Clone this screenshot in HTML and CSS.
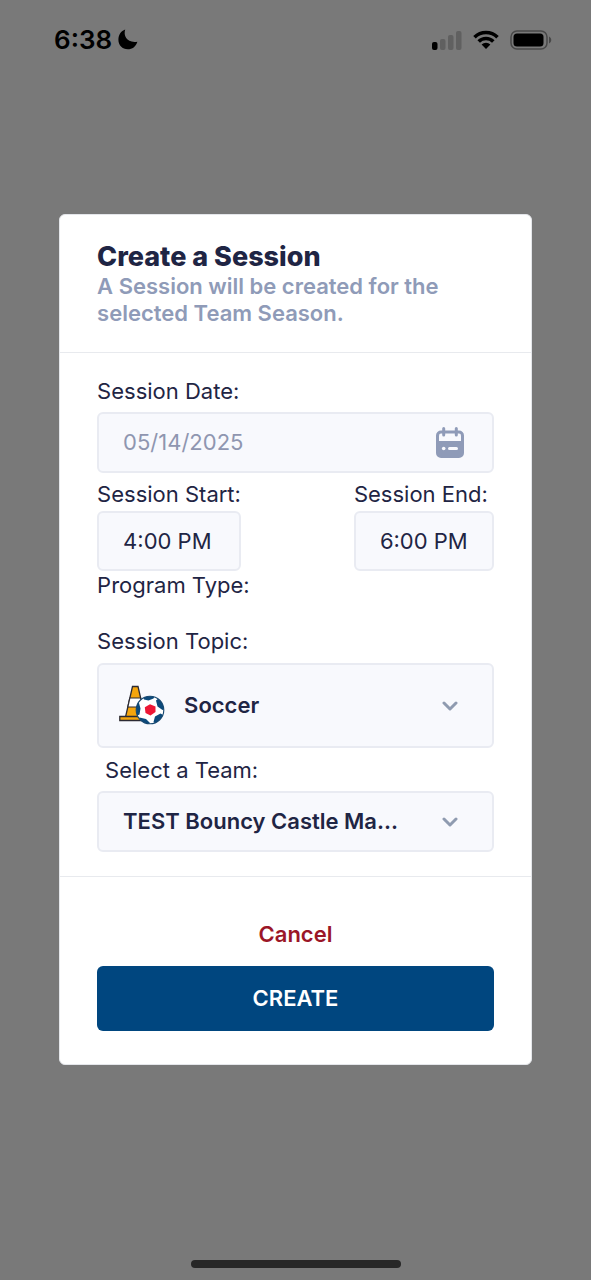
FILE: index.html
```html
<!DOCTYPE html>
<html lang="en">
<head>
<meta charset="utf-8">
<meta name="viewport" content="width=device-width, initial-scale=1">
<title>Create a Session</title>
<link rel="stylesheet" href="styles.css">
</head>
<body class="screen">
<header class="status">
  <div class="status-group">
    <span class="clock">6:38</span>
    <svg class="moon" width="20" height="21" viewBox="0 0 20 21" aria-hidden="true"><path d="M7.2.6C5 7.4 9.600 14.500 19.400 12.700 17.800 17.600 14.300 20.300 9.800 20.300 4.300 20.300.4 16.200.4 10.800.4 6 3 2 7.200.6Z"/></svg>
  </div>
  <div class="status-group status-icons">
    <svg width="30" height="20" viewBox="0 0 30 20" aria-hidden="true"><rect y="12" width="5.500" height="8" rx="2"/><g fill="#606060"><rect x="8" y="9" width="5.500" height="11" rx="2"/><rect x="16" y="5" width="5.500" height="15" rx="2"/><rect x="24" y="1" width="5.500" height="19" rx="2"/></g></svg>
    <svg width="26" height="19" viewBox="0 0 26 19" aria-hidden="true"><g fill="none" stroke="#000" stroke-width="3.600"><path d="M1.500 7.200A16.500 16.500 0 0 1 24.500 7.200"/><path d="M5.700 11.500A10.400 10.400 0 0 1 20.300 11.500"/></g><path d="M13 19 8.600 14.600A6.300 6.300 0 0 1 17.400 14.600Z"/></svg>
    <svg width="42" height="20" viewBox="0 0 42 20" aria-hidden="true"><rect x="1" y="1" width="36" height="18" rx="6" fill="none" stroke="#484848" stroke-width="1.500"/><rect x="3.500" y="3.500" width="30" height="13" rx="3.500"/><path d="M39 6.500c3 1.500 3 5.500 0 7Z" fill="#484848"/></svg>
  </div>
</header>

<main class="stage">
  <form class="modal" role="dialog" aria-labelledby="title">
    <div class="modal-head">
      <h1 class="title" id="title">Create a Session</h1>
      <p class="subtitle">A Session will be created for the selected Team Season.</p>
    </div>
    <div class="modal-body">
      <label class="label" for="date">Session Date:</label>
      <div class="control">
        <input class="field muted" id="date" type="text" value="05/14/2025">
        <svg class="calendar" width="28" height="31" viewBox="0 0 28 31" aria-hidden="true"><path d="M5 3.500H23A5 5 0 0 1 28 8.500V26A5 5 0 0 1 23 31H5A5 5 0 0 1 0 26V8.500A5 5 0 0 1 5 3.500Z" fill="#8f9bb8"/><path d="M3 14V8.500Q3 6.500 5 6.500H23Q25 6.500 25 8.500V14Z" fill="#f8f9fd"/><path d="M7.700 1.500V8M20.300 1.500V8" stroke="#8f9bb8" stroke-width="3" stroke-linecap="round"/><circle cx="7.700" cy="21.500" r="1.800" fill="#f8f9fd"/><path d="M13.500 21.500H20.500" stroke="#f8f9fd" stroke-width="3" stroke-linecap="round"/></svg>
      </div>
      <div class="times">
        <div class="time-start">
          <label class="label" for="start">Session Start:</label>
          <input class="field" id="start" type="text" value="4:00 PM">
        </div>
        <div class="time-end">
          <label class="label" for="end">Session End:</label>
          <input class="field" id="end" type="text" value="6:00 PM">
        </div>
      </div>
      <p class="label program">Program Type:</p>
      <label class="label" for="topic">Session Topic:</label>
      <div class="control topic-control">
        <select class="field select tall" id="topic"><option>Soccer</option></select>
        <svg class="soccer" width="46" height="40" viewBox="0 0 46 40" aria-hidden="true">
          <path d="M13.500 1.500H19L26 32H6.500Z" fill="#f5a50c" stroke="#2b2a33" stroke-width="1.300"/>
          <path d="M10.800 13H21.600L24 22H8.800Z" fill="#fff" stroke="#2b2a33" stroke-width="1.200"/>
          <path d="M.8 31.500H25V35.500H.8Z" fill="#f5a50c" stroke="#2b2a33" stroke-width="1.300"/>
          <clipPath id="ball"><circle cx="31" cy="25" r="13.800"/></clipPath>
          <circle cx="31" cy="25" r="13.800" fill="#fff"/>
          <g clip-path="url(#ball)" fill="#0c4a7b"><path d="M23 9H37L34.500 13.500 29.500 15.500 25 14.500ZM15 18.500 20 18 21.500 23.500 20.500 29.500 15 32ZM20.500 32.500 27 34 31 38 29 41H20ZM34.500 37 36 31.500 41.500 28.500 46 31 39 41ZM37 15.500 41 12 47 24 43.500 25 38.500 21.500Z"/></g>
          <path d="M31 19.200 36.500 21.500 36.500 27 31.500 30.500 26.500 28 25.800 22.200Z" fill="#ed1735"/>
          <circle cx="31" cy="25" r="13.800" fill="none" stroke="#16476f" stroke-width="1.100"/>
        </svg>
        <svg class="chevron" width="16" height="10" viewBox="0 0 16 10" aria-hidden="true"><path d="M2 2 8 8 14 2"/></svg>
      </div>
      <label class="label team-label" for="team">Select a Team:</label>
      <div class="control">
        <select class="field select" id="team"><option>TEST Bouncy Castle Ma...</option></select>
        <svg class="chevron" width="16" height="10" viewBox="0 0 16 10" aria-hidden="true"><path d="M2 2 8 8 14 2"/></svg>
      </div>
    </div>
    <div class="modal-foot">
      <button class="cancel" type="button">Cancel</button>
      <button class="create" type="submit">CREATE</button>
    </div>
  </form>
</main>

<footer class="home"><div class="home-bar"></div></footer>
</body>
</html>
```
FILE: styles.css
```css
* {
  box-sizing: border-box;
}

.screen {
  margin: 0;
  min-height: 100vh;
  display: flex;
  flex-direction: column;
  background: #797979;
  color: #1f2544;
  font-family: Inter, "Liberation Sans", sans-serif;
  font-size: 22px;
  line-height: 28px;
}

.status {
  height: 78px;
  padding: 1px 39px 0 54px;
  display: flex;
  align-items: center;
  justify-content: space-between;
  color: #000;
}

.status-group {
  display: flex;
  align-items: center;
  gap: 6px;
}

.status-icons {
  gap: 11px;
}

.clock {
  font-size: 26px;
  font-weight: 600;
}

.stage {
  flex: 1;
  display: flex;
  align-items: center;
  justify-content: center;
}

.modal {
  width: 80%;
  background: #fff;
  border: 1px solid #e4e6ea;
  border-radius: 6px;
}

.modal-head {
  padding: 26px 37px 25px;
  border-bottom: 1px solid #e8eaee;
}

.title {
  margin: 0;
  font-size: 27px;
  font-weight: 800;
  line-height: 32px;
}

.subtitle {
  margin: 0;
  color: #8f9bb8;
  font-weight: 600;
  line-height: 27px;
}

.modal-body {
  padding: 24px 37px;
  border-bottom: 1px solid #e8eaee;
}

.label {
  display: block;
  margin: 0;
  white-space: nowrap;
}

.control {
  position: relative;
  margin: 7px 0;
}

.topic-control {
  margin: 8px 0;
}

.field {
  display: block;
  width: 100%;
  height: 61px;
  margin: 0;
  padding: 0 24px;
  border: 2px solid #e9ebf2;
  border-radius: 6px;
  background: #f8f9fd;
  color: inherit;
  font: inherit;
}

.muted {
  color: #8f96b0;
}

.select {
  appearance: none;
  font-weight: 600;
}

.tall {
  height: 85px;
  padding-left: 85px;
}

.calendar {
  position: absolute;
  right: 30px;
  top: 15px;
}

.soccer {
  position: absolute;
  left: 22px;
  top: 22px;
}

.chevron {
  position: absolute;
  right: 36px;
  top: calc(50% - 4px);
  fill: none;
  stroke: #8f9bb0;
  stroke-width: 3;
  stroke-linecap: round;
  stroke-linejoin: round;
}

.times {
  display: flex;
  justify-content: space-between;
}

.times .field {
  margin-top: 3px;
  height: 60px;
}

.time-start {
  width: 144px;
}

.time-end {
  width: 140px;
}

.program {
  margin-bottom: 28px;
}

.team-label {
  padding-left: 8px;
}

.modal-body .control:last-child {
  margin-bottom: 0;
}

.modal-foot {
  padding: 33px 37px;
  display: flex;
  flex-direction: column;
}

.cancel {
  height: 48px;
  margin-bottom: 8px;
  padding: 0;
  border: 0;
  background: none;
  color: #9b1627;
  font: inherit;
  font-weight: 600;
}

.create {
  height: 65px;
  border: 0;
  border-radius: 6px;
  background: #00467f;
  color: #fff;
  font: inherit;
  font-weight: 600;
}

.home {
  height: 80px;
  display: flex;
  align-items: flex-end;
  justify-content: center;
  padding-bottom: 12px;
}

.home-bar {
  width: 210px;
  height: 8px;
  border-radius: 4px;
  background: #272727;
}
```
